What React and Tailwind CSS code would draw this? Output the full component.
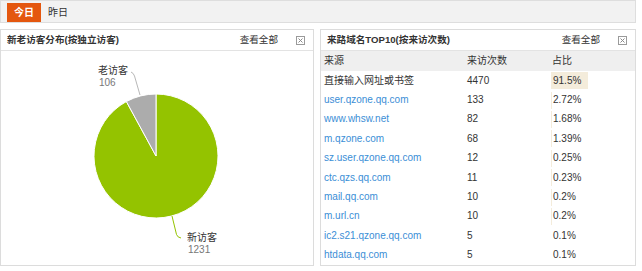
import React from "react";

const rows = [
  { src: "直接输入网址或书签", link: false, n: "4470", p: 91.5, ps: "91.5%" },
  { src: "user.qzone.qq.com", link: true, n: "133", p: 2.72, ps: "2.72%" },
  { src: "www.whsw.net", link: true, n: "82", p: 1.68, ps: "1.68%" },
  { src: "m.qzone.com", link: true, n: "68", p: 1.39, ps: "1.39%" },
  { src: "sz.user.qzone.qq.com", link: true, n: "12", p: 0.25, ps: "0.25%" },
  { src: "ctc.qzs.qq.com", link: true, n: "11", p: 0.23, ps: "0.23%" },
  { src: "mail.qq.com", link: true, n: "10", p: 0.2, ps: "0.2%" },
  { src: "m.url.cn", link: true, n: "10", p: 0.2, ps: "0.2%" },
  { src: "ic2.s21.qzone.qq.com", link: true, n: "5", p: 0.1, ps: "0.1%" },
  { src: "htdata.qq.com", link: true, n: "5", p: 0.1, ps: "0.1%" },
];

function CloseIcon() {
  return (
    <svg width="9" height="9" viewBox="0 0 9 9" className="block">
      <rect x="0.5" y="0.5" width="8" height="8" fill="#fff" stroke="#9a9a9a" />
      <path d="M2.5 2.5 L6.5 6.5 M6.5 2.5 L2.5 6.5" stroke="#8a8a8a" strokeWidth="1" />
    </svg>
  );
}

function PanelHeader({ title }) {
  return (
    <div className="h-[21px] border-b border-[#e3e3e3] bg-white flex items-center pl-[6px] pr-[8px] text-[9.6px]">
      <span className="font-semibold text-[#333] flex-1 whitespace-nowrap">{title}</span>
      <span className="text-[#333] mr-[18px]">查看全部</span>
      <CloseIcon />
    </div>
  );
}

export default function App() {
  return (
    <div
      className="w-[642px] h-[271px] bg-white text-[10px] leading-[12px] text-[#333] overflow-hidden"
      style={{ fontFamily: '"Liberation Sans", "Noto Sans CJK SC", sans-serif' }}
    >
      <div className="w-[636px] h-[23px] bg-[#f2f2f2] border border-[#dedede] flex items-end pl-[6px]">
        <div className="h-[19px] w-[34px] bg-[#e4570f] text-white font-bold flex items-center justify-center">
          今日
        </div>
        <div className="h-[19px] flex items-center ml-[7px] text-[#333]">昨日</div>
      </div>

      <div className="flex gap-[6px] mt-[6px] w-[636px]">
        <div className="w-[314px] h-[237px] border border-[#dcdcdc] flex flex-col">
          <PanelHeader title="新老访客分布(按独立访客)" />
          <div className="relative flex-1 bg-white">
            <svg width="312" height="214" className="absolute left-0 top-0">
              <path
                d="M155 105 L125.38 50.53 A62 62 0 1 0 155 43 Z"
                fill="#94c300"
                stroke="#fff"
                strokeWidth="1"
              />
              <path
                d="M155 105 L155 43 A62 62 0 0 0 125.38 50.53 Z"
                fill="#acacac"
                stroke="#fff"
                strokeWidth="1"
              />
              <path d="M139 44 L133.5 25 Q132.5 22 130 21" fill="none" stroke="#b8b8b8" strokeWidth="1" />
              <path d="M171 165 L175.5 183.5 Q176.5 186.5 180 187" fill="none" stroke="#94c300" strokeWidth="1" />
            </svg>
            <div className="absolute left-[97px] top-[14px] text-[#333]">老访客</div>
            <div className="absolute left-[98px] top-[26px] text-[#777]">106</div>
            <div className="absolute left-[186px] top-[181px] text-[#333]">新访客</div>
            <div className="absolute left-[187px] top-[193px] text-[#777]">1231</div>
          </div>
        </div>

        <div className="w-[316px] h-[237px] border border-[#dcdcdc] flex flex-col">
          <PanelHeader title="来路域名TOP10(按来访次数)" />
          <div className="flex-1 bg-white">
            <div className="grid grid-cols-[143px_87px_1fr] h-[20px] items-center bg-[#efefef] text-[#333]">
              <div className="pl-[3px]">来源</div>
              <div className="pl-[3px]">来访次数</div>
              <div className="pl-[1px]">占比</div>
            </div>
            {rows.map((r, i) => (
              <div key={i} className="grid grid-cols-[143px_87px_1fr] h-[19.4px] items-center">
                <div className={"pl-[3px] whitespace-nowrap " + (r.link ? "text-[#3b8ed6]" : "text-[#333]")}>
                  {r.src}
                </div>
                <div className="pl-[3px] text-[#333]">{r.n}</div>
                <div className="relative h-[17px] flex items-center">
                  <div
                    className="absolute left-0 top-0 h-[17px] bg-[#f4ecdb]"
                    style={{ width: `${(r.p * 40) / 100}px` }}
                  />
                  <span className="relative pl-[2px] text-[#333]">{r.ps}</span>
                </div>
              </div>
            ))}
          </div>
        </div>
      </div>
    </div>
  );
}
